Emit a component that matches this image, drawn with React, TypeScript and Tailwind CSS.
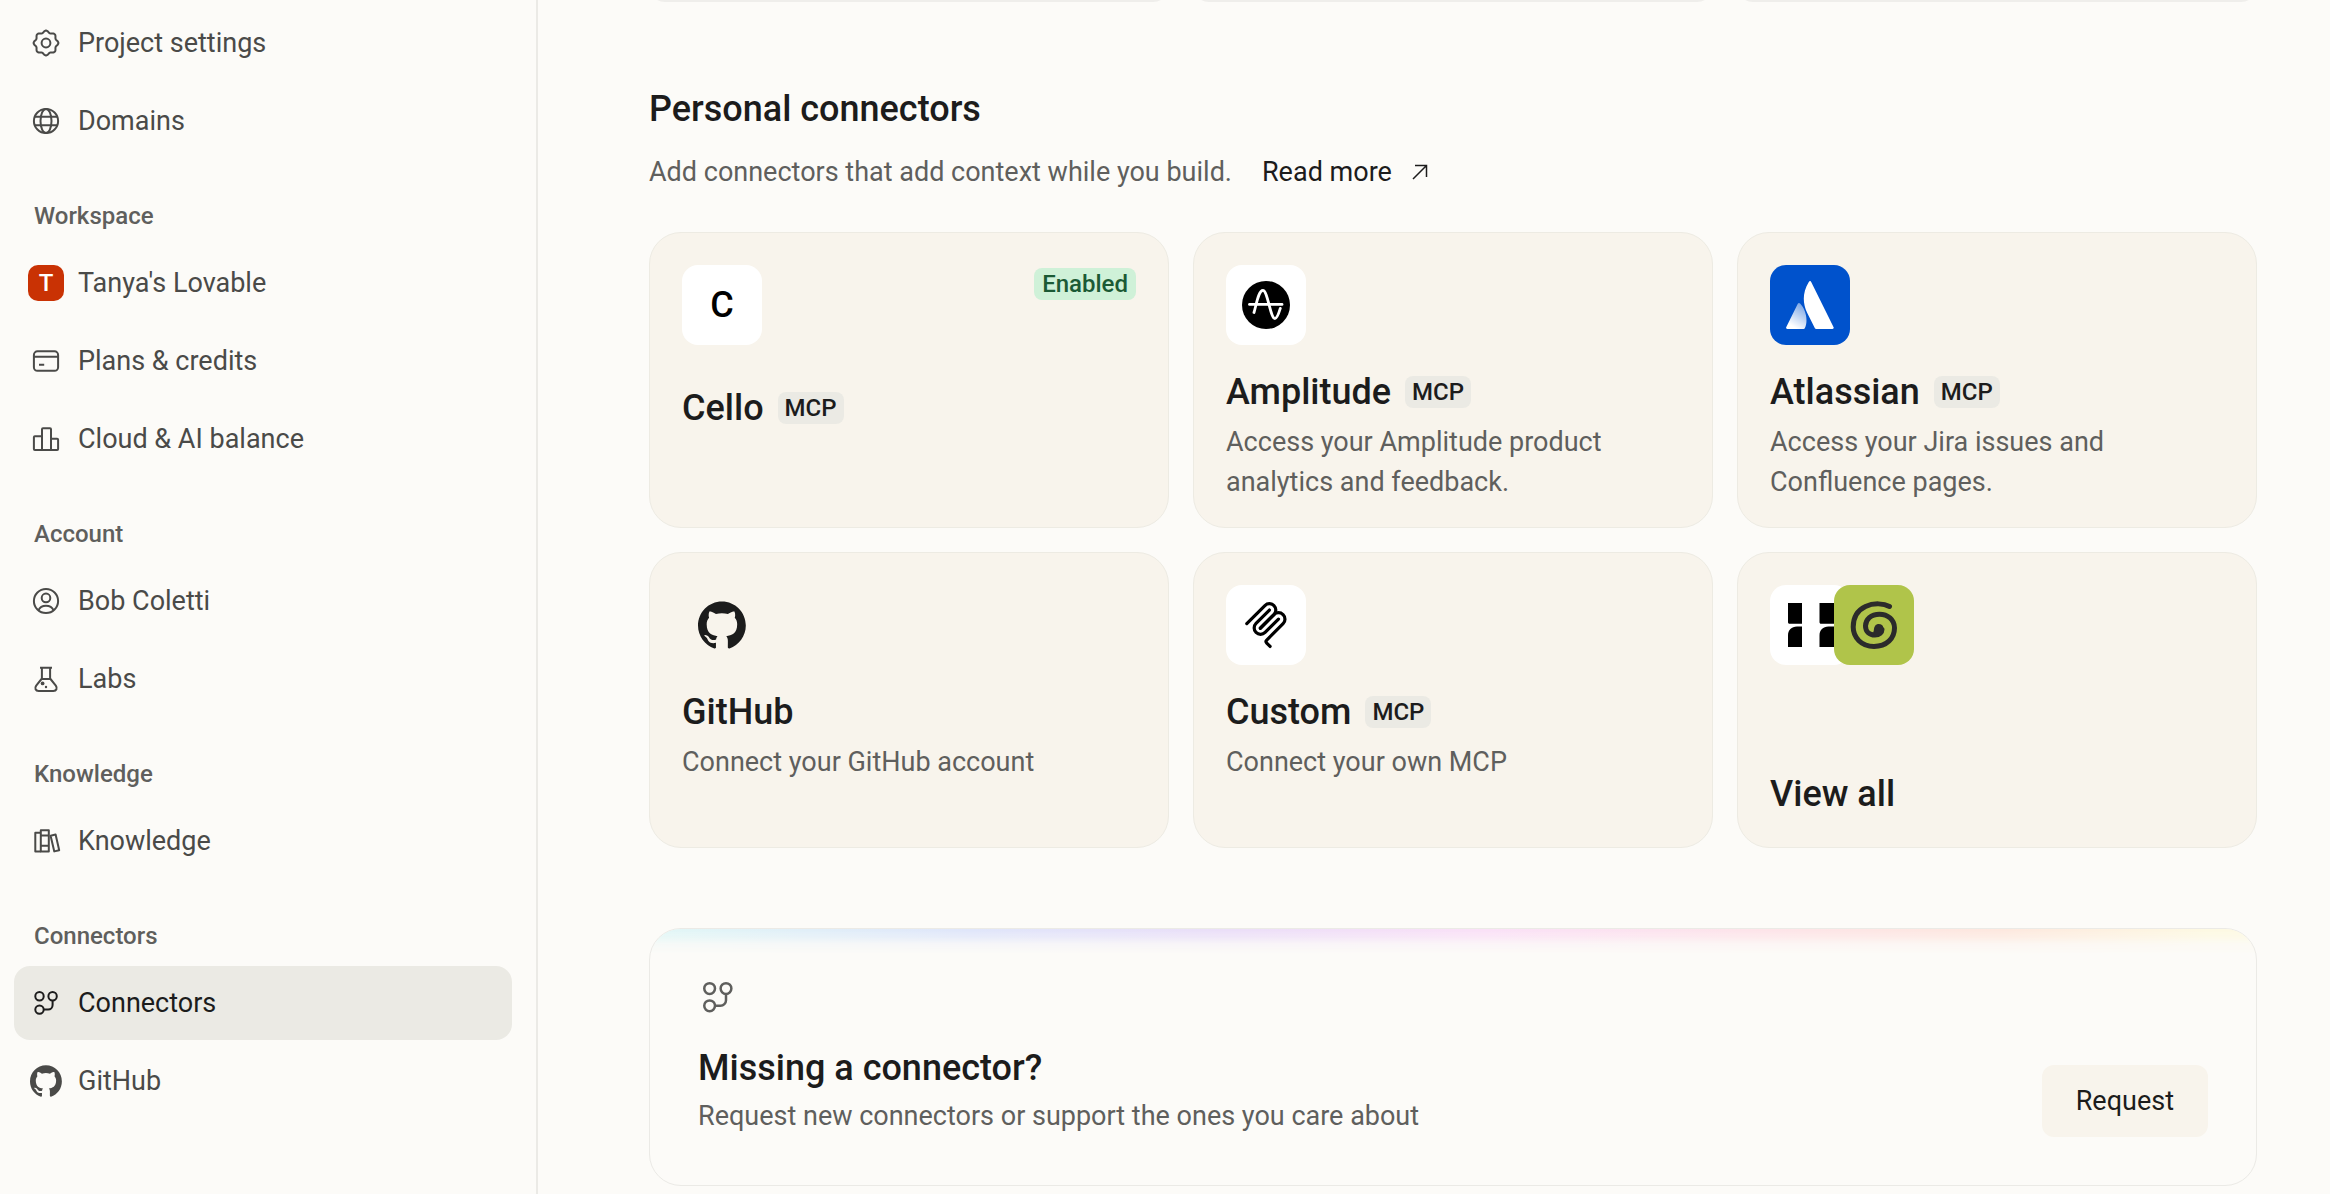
import type { ReactNode } from 'react'
import { clsx } from 'clsx'

type IconProps = { className?: string }

type NavItem = {
  label: string
  icon: ReactNode
  active?: boolean
}

type NavSection = {
  title?: string
  items: NavItem[]
}

type Connector = {
  name: string
  description?: string
  logo: ReactNode
  mcp?: boolean
  enabled?: boolean
}

// Eight-lobed outline used by the settings icon
const gearPoints = Array.from({ length: 96 }, (_, i) => {
  const angle = (i / 96) * Math.PI * 2
  const radius = 11.4 + Math.cos(angle * 8)
  return `${(18 + radius * Math.sin(angle)).toFixed(2)},${(18 - radius * Math.cos(angle)).toFixed(2)}`
}).join(' ')

function LineIcon({ children }: { children: ReactNode }) {
  return (
    <svg
      viewBox="0 0 36 36"
      className="size-9"
      fill="none"
      stroke="currentColor"
      strokeWidth="2"
      strokeLinejoin="round"
      aria-hidden="true"
    >
      {children}
    </svg>
  )
}

function GearIcon() {
  return (
    <LineIcon>
      <polygon points={gearPoints} />
      <circle cx="18" cy="18" r="4.4" />
    </LineIcon>
  )
}

function GlobeIcon() {
  return (
    <LineIcon>
      <circle cx="18" cy="18" r="12.1" />
      <ellipse cx="18" cy="18" rx="5.5" ry="12.1" />
      <path d="M6.7 13.8h22.6M6.7 22.2h22.6" />
    </LineIcon>
  )
}

function CardIcon() {
  return (
    <LineIcon>
      <rect x="5.9" y="8.3" width="24.2" height="19.5" rx="3.6" />
      <path d="M6 13.8h24M11 21.8h5.2" />
    </LineIcon>
  )
}

function BarsIcon() {
  return (
    <LineIcon>
      <path d="M14 29H6.9a1 1 0 0 1-1-1V16.3a1 1 0 0 1 1-1H14" />
      <path d="M14 29V8.3a1 1 0 0 1 1-1h7a1 1 0 0 1 1 1V29z" />
      <path d="M23 17.8h6.1a1 1 0 0 1 1 1V28a1 1 0 0 1-1 1H23" />
    </LineIcon>
  )
}

function UserIcon() {
  return (
    <LineIcon>
      <circle cx="18" cy="18" r="12.1" />
      <circle cx="18" cy="14.9" r="4.3" />
      <path d="M10.4 27.4c1.3-3 4.1-4.6 7.6-4.6s6.3 1.6 7.6 4.6" />
    </LineIcon>
  )
}

function FlaskIcon() {
  return (
    <LineIcon>
      <path d="M12 6.7h12M13.9 6.7v10.8l-5.7 7.1c-1.9 2.7-.6 5.3 2.4 5.3h14.8c3 0 4.3-2.6 2.4-5.3l-5.7-7.1V6.7M13.9 18h8.2" />
      <circle cx="14.6" cy="22.4" r="1.9" fill="currentColor" stroke="none" />
      <circle cx="18" cy="26" r="1.2" fill="currentColor" stroke="none" />
    </LineIcon>
  )
}

function BooksIcon() {
  return (
    <LineIcon>
      <path d="M12.8 9.8H7.3V28.5h5.5" />
      <path d="M12.8 7.3h8v21.2h-8zM12.8 12.6h8M12.8 22.8h8" />
      <path d="M22.6 12.7l5-1.2 3.6 15.7-4.9 1.2z" />
    </LineIcon>
  )
}

function NodesIcon() {
  return (
    <LineIcon>
      <circle cx="11.5" cy="11.2" r="4.2" />
      <circle cx="24.6" cy="11.2" r="4.2" />
      <circle cx="11.5" cy="24.6" r="4.2" />
      <path d="M24.6 15.4v4.7a4.5 4.5 0 0 1-4.5 4.5h-4.4" />
    </LineIcon>
  )
}

function GitHubMark({ className }: IconProps) {
  return (
    <svg viewBox="0 0 98 96" className={className} fill="currentColor" aria-hidden="true">
      <path
        fillRule="evenodd"
        clipRule="evenodd"
        d="M48.854 0C21.839 0 0 22 0 49.217c0 21.756 13.993 40.172 33.405 46.69 2.427.49 3.316-1.059 3.316-2.362 0-1.141-.08-5.052-.08-9.127-13.59 2.934-16.42-5.867-16.42-5.867-2.184-5.704-5.42-7.17-5.42-7.17-4.448-3.015.324-3.015.324-3.015 4.934.326 7.523 5.052 7.523 5.052 4.367 7.496 11.404 5.378 14.235 4.074.404-3.178 1.699-5.378 3.074-6.6-10.839-1.141-22.243-5.378-22.243-24.283 0-5.378 1.94-9.778 5.014-13.2-.485-1.222-2.184-6.275.486-13.038 0 0 4.125-1.304 13.426 5.052a46.97 46.97 0 0 1 12.214-1.63c4.125 0 8.33.571 12.213 1.63 9.302-6.356 13.427-5.052 13.427-5.052 2.67 6.763.97 11.816.485 13.038 3.155 3.422 5.015 7.822 5.015 13.2 0 18.905-11.404 23.06-22.324 24.283 1.78 1.548 3.316 4.481 3.316 9.126 0 6.6-.08 11.897-.08 13.526 0 1.304.89 2.853 3.316 2.364 19.412-6.52 33.405-24.935 33.405-46.691C97.707 22 75.788 0 48.854 0z"
      />
    </svg>
  )
}

function AmplitudeLogo() {
  return (
    <svg viewBox="0 0 48 48" className="size-12" fill="none" aria-hidden="true">
      <circle cx="24" cy="24" r="24" fill="#000" />
      <g stroke="#fff" strokeWidth="2.8" strokeLinecap="round">
        <path d="M7.5 23.4H40" />
        <path d="M12 31.5C14.6 22.5 16.6 9.4 20.9 9.4c4.8 0 7.5 28.2 12 28.2 2.3 0 4-5.6 5.4-10.2" />
      </g>
    </svg>
  )
}

function AtlassianLogo() {
  return (
    <svg viewBox="0 0 48 48" className="size-12" aria-hidden="true">
      <defs>
        <linearGradient id="atlassian-fade" x1="20" y1="26" x2="8" y2="46" gradientUnits="userSpaceOnUse">
          <stop offset="0" stopColor="#fff" stopOpacity="0.5" />
          <stop offset="1" stopColor="#fff" />
        </linearGradient>
      </defs>
      <path
        fill="url(#atlassian-fade)"
        d="M14.1 22.6c-.7-.8-1.8-.7-2.3.2L.2 46.3c-.4.8.2 1.7 1.1 1.7h16.3c.5 0 1-.3 1.2-.8 3.5-7.2 1.4-18.2-4.7-24.6z"
      />
      <path
        fill="#fff"
        d="M22.8 1c-6.6 10.4-6.1 21.8-1.8 30.4l7.9 15.8c.2.5.7.8 1.3.8h16.3c.9 0 1.5-.9 1.1-1.7L25.2.9c-.5-1.1-1.8-1-2.4.1z"
      />
    </svg>
  )
}

function McpLogo() {
  return (
    <svg
      viewBox="0 0 180 180"
      className="size-12"
      fill="none"
      stroke="#000"
      strokeWidth="12"
      strokeLinecap="round"
      aria-hidden="true"
    >
      <path d="M18 84.853 85.882 16.971c9.373-9.373 24.569-9.373 33.941 0s9.373 24.568 0 33.941l-51.265 51.265" />
      <path d="m69.265 101.47 50.558-50.558c9.373-9.373 24.569-9.373 33.942 0l.353.353c9.373 9.373 9.373 24.569 0 33.941L92.725 146.6c-3.124 3.124-3.124 8.189 0 11.313l12.606 12.607" />
      <path d="M102.853 33.941 52.648 84.146c-9.372 9.372-9.372 24.568 0 33.941s24.569 9.372 33.941 0l50.205-50.205" />
    </svg>
  )
}

function BlocksLogo() {
  return (
    <svg viewBox="0 0 48 48" className="size-12" fill="#000" aria-hidden="true">
      <path d="M2 2h14v20.8H3.5c-.8 0-1.5-.7-1.5-1.5zM2 46V34.5c0-5.5 3.5-9 9-9h5V46z" />
      <path d="M33.5 2H48v20.8H35c-.8 0-1.5-.7-1.5-1.5zM33.5 46V34.5c0-5.5 3.5-9 9-9H48V46z" />
    </svg>
  )
}

function SpiralLogo() {
  return (
    <svg
      viewBox="0 0 48 48"
      className="size-12"
      fill="none"
      stroke="#2b2b2b"
      strokeLinecap="round"
      aria-hidden="true"
    >
      <path
        strokeWidth="5"
        d="M39.5 5.5C34 2.5 24 1.5 15.5 5.5 6 10 3.2 18.5 3.2 26c0 10.5 8.3 19.5 20.8 19.5 12.5 0 20.5-8 20.5-18.5 0-8.5-7-13.8-15-13.8-8.5 0-14 5.3-14 11.8 0 5.5 4 9 9.5 9 4.5 0 7-2.5 7-5.5"
      />
      <path
        fill="#2b2b2b"
        stroke="none"
        d="M33.2 26.5c0 5-3 9-7 9-3 0-3.5-3-2.4-6 .3-4.5 2.2-6.5 4.9-6.5s4.5 1.3 4.5 3.5z"
      />
    </svg>
  )
}

function LogoTile({ className, children }: { className?: string; children?: ReactNode }) {
  return (
    <div className={clsx('grid size-20 shrink-0 place-items-center rounded-2xl', className)}>
      {children}
    </div>
  )
}

const sections: NavSection[] = [
  {
    items: [
      { label: 'Project settings', icon: <GearIcon /> },
      { label: 'Domains', icon: <GlobeIcon /> },
    ],
  },
  {
    title: 'Workspace',
    items: [
      {
        label: "Tanya's Lovable",
        icon: (
          <span className="grid size-9 place-items-center rounded-[10px] bg-[#c93204] text-2xl font-medium text-white">
            T
          </span>
        ),
      },
      { label: 'Plans & credits', icon: <CardIcon /> },
      { label: 'Cloud & AI balance', icon: <BarsIcon /> },
    ],
  },
  {
    title: 'Account',
    items: [
      { label: 'Bob Coletti', icon: <UserIcon /> },
      { label: 'Labs', icon: <FlaskIcon /> },
    ],
  },
  {
    title: 'Knowledge',
    items: [{ label: 'Knowledge', icon: <BooksIcon /> }],
  },
  {
    title: 'Connectors',
    items: [
      { label: 'Connectors', icon: <NodesIcon />, active: true },
      { label: 'GitHub', icon: <GitHubMark className="size-8" /> },
    ],
  },
]

const connectors: Connector[] = [
  {
    name: 'Cello',
    logo: <LogoTile className="bg-white text-4xl font-medium text-black">C</LogoTile>,
    mcp: true,
    enabled: true,
  },
  {
    name: 'Amplitude',
    description: 'Access your Amplitude product analytics and feedback.',
    logo: (
      <LogoTile className="bg-white">
        <AmplitudeLogo />
      </LogoTile>
    ),
    mcp: true,
  },
  {
    name: 'Atlassian',
    description: 'Access your Jira issues and Confluence pages.',
    logo: (
      <LogoTile className="bg-[#0052cc]">
        <AtlassianLogo />
      </LogoTile>
    ),
    mcp: true,
  },
  {
    name: 'GitHub',
    description: 'Connect your GitHub account',
    logo: (
      <LogoTile>
        <GitHubMark className="size-12" />
      </LogoTile>
    ),
  },
  {
    name: 'Custom',
    description: 'Connect your own MCP',
    logo: (
      <LogoTile className="bg-white">
        <McpLogo />
      </LogoTile>
    ),
    mcp: true,
  },
]

function SidebarLink({ label, icon, active }: NavItem) {
  return (
    <a
      href="#"
      aria-current={active ? 'page' : undefined}
      className={clsx(
        'flex items-center gap-3.5 rounded-2xl px-3.5 py-[17px] text-[27px] leading-10',
        active ? 'bg-[#ebeae4] text-[#1c1c1c]' : 'text-[#4a4a48]'
      )}
    >
      <span className="grid size-9 shrink-0 place-items-center">{icon}</span>
      {label}
    </a>
  )
}

function Sidebar() {
  return (
    <nav className="w-[538px] shrink-0 border-r-2 border-[#ebeae6] pt-1.5 pr-6 pl-3.5">
      {sections.map((section) => (
        <div key={section.title ?? 'Project'}>
          {section.title && (
            <h3 className="px-5 pt-10 pb-3 text-2xl leading-9 font-medium text-[#5f5f5d]">
              {section.title}
            </h3>
          )}
          <div className="flex flex-col gap-1">
            {section.items.map((item) => (
              <SidebarLink key={item.label} {...item} />
            ))}
          </div>
        </div>
      ))}
    </nav>
  )
}

const cardClass =
  'flex min-h-[296px] flex-col rounded-4xl border border-[#edebe3] bg-[#f8f4ec] p-8 pb-6 text-left'

function ConnectorCard({ name, description, logo, mcp, enabled }: Connector) {
  return (
    <button type="button" className={cardClass}>
      <div className="flex w-full items-start justify-between">
        {logo}
        {enabled && (
          <span className="mt-[3px] rounded-lg bg-[#cff1d8] px-2 text-2xl leading-8 font-medium text-[#1b5a35]">
            Enabled
          </span>
        )}
      </div>
      <div className={clsx('flex items-center gap-3.5', description ? 'mt-7' : 'mt-11')}>
        <h3 className="text-4xl leading-[38px] font-medium">{name}</h3>
        {mcp && (
          <span className="rounded-lg bg-[#ebeae4] px-[7px] text-2xl leading-8 font-medium">MCP</span>
        )}
      </div>
      {description && (
        <p className="mt-[11px] max-w-[420px] text-[27px] leading-10 text-[#5f5f5d]">{description}</p>
      )}
    </button>
  )
}

export default function App() {
  return (
    <div className="flex min-h-screen bg-[#fcfbf8] font-['Roboto',sans-serif] text-[#1c1c1c]">
      <Sidebar />

      <main className="min-w-0 flex-1 pr-[73px] pb-2 pl-[111px]">
        {/* Bottom edge of the shared connectors above */}
        <div className="grid grid-cols-3 gap-6" aria-hidden="true">
          {[0, 1, 2].map((i) => (
            <div key={i} className="flex h-0.5 items-end overflow-hidden">
              <div className="h-10 w-full shrink-0 rounded-2xl bg-[#efeeeb]" />
            </div>
          ))}
        </div>

        {/* Personal connectors */}
        <section className="pt-[87px]">
          <h2 className="text-4xl leading-10 font-medium">Personal connectors</h2>
          <div className="mt-[23px] flex items-center gap-[30px] text-[27px] leading-10">
            <p className="text-[#5f5f5d]">Add connectors that add context while you build.</p>
            <a href="#" className="flex items-center gap-5">
              Read more
              <svg
                viewBox="0 0 16 16"
                className="size-4"
                fill="none"
                stroke="currentColor"
                strokeWidth="1.5"
                aria-hidden="true"
              >
                <path d="M1 15 14.5 1.5M3 1.5h11.5V13" />
              </svg>
            </a>
          </div>

          <div className="mt-10 grid grid-cols-3 gap-6">
            {connectors.map((connector) => (
              <ConnectorCard key={connector.name} {...connector} />
            ))}
            <button type="button" className={cardClass}>
              <div className="flex">
                <LogoTile className="bg-white">
                  <BlocksLogo />
                </LogoTile>
                <LogoTile className="-ml-4 bg-[#b0c44a]">
                  <SpiralLogo />
                </LogoTile>
              </div>
              <h3 className="mt-auto pb-2.5 text-4xl leading-[38px] font-medium">View all</h3>
            </button>
          </div>
        </section>

        {/* Missing connector */}
        <section className="relative mt-20 flex items-end justify-between overflow-hidden rounded-4xl border border-[#ebeae6] p-12">
          <div
            className="absolute inset-x-0 top-0 h-7 bg-[linear-gradient(90deg,#e2f7f6_0%,#e0e6fa_20%,#ebdff8_36%,#fae1f7_52%,#fde4ea_68%,#fde8df_84%,#fdf9e3_97%)] [mask-image:linear-gradient(to_bottom,black_5%,rgba(0,0,0,0.7)_30%,rgba(0,0,0,0.2)_55%,transparent_90%)]"
            aria-hidden="true"
          />
          <div>
            <svg
              viewBox="2 2 32 32"
              className="size-10 text-[#5f5f5d]"
              fill="none"
              stroke="currentColor"
              strokeWidth="2"
              aria-hidden="true"
            >
              <circle cx="11.3" cy="11.2" r="4.3" />
              <circle cx="24.4" cy="11.2" r="4.3" />
              <circle cx="11.3" cy="25" r="4.3" />
              <path d="M24.4 15.5v5a4.5 4.5 0 0 1-4.5 4.5h-4.3" />
            </svg>
            <h2 className="mt-[31px] text-4xl leading-10 font-medium">Missing a connector?</h2>
            <p className="mt-2 pb-px text-[27px] leading-10 text-[#5f5f5d]">
              Request new connectors or support the ones you care about
            </p>
          </div>
          <button
            type="button"
            className="rounded-xl bg-[#f8f4ec] px-[34px] py-4 text-[27px] leading-10"
          >
            Request
          </button>
        </section>
      </main>
    </div>
  )
}
